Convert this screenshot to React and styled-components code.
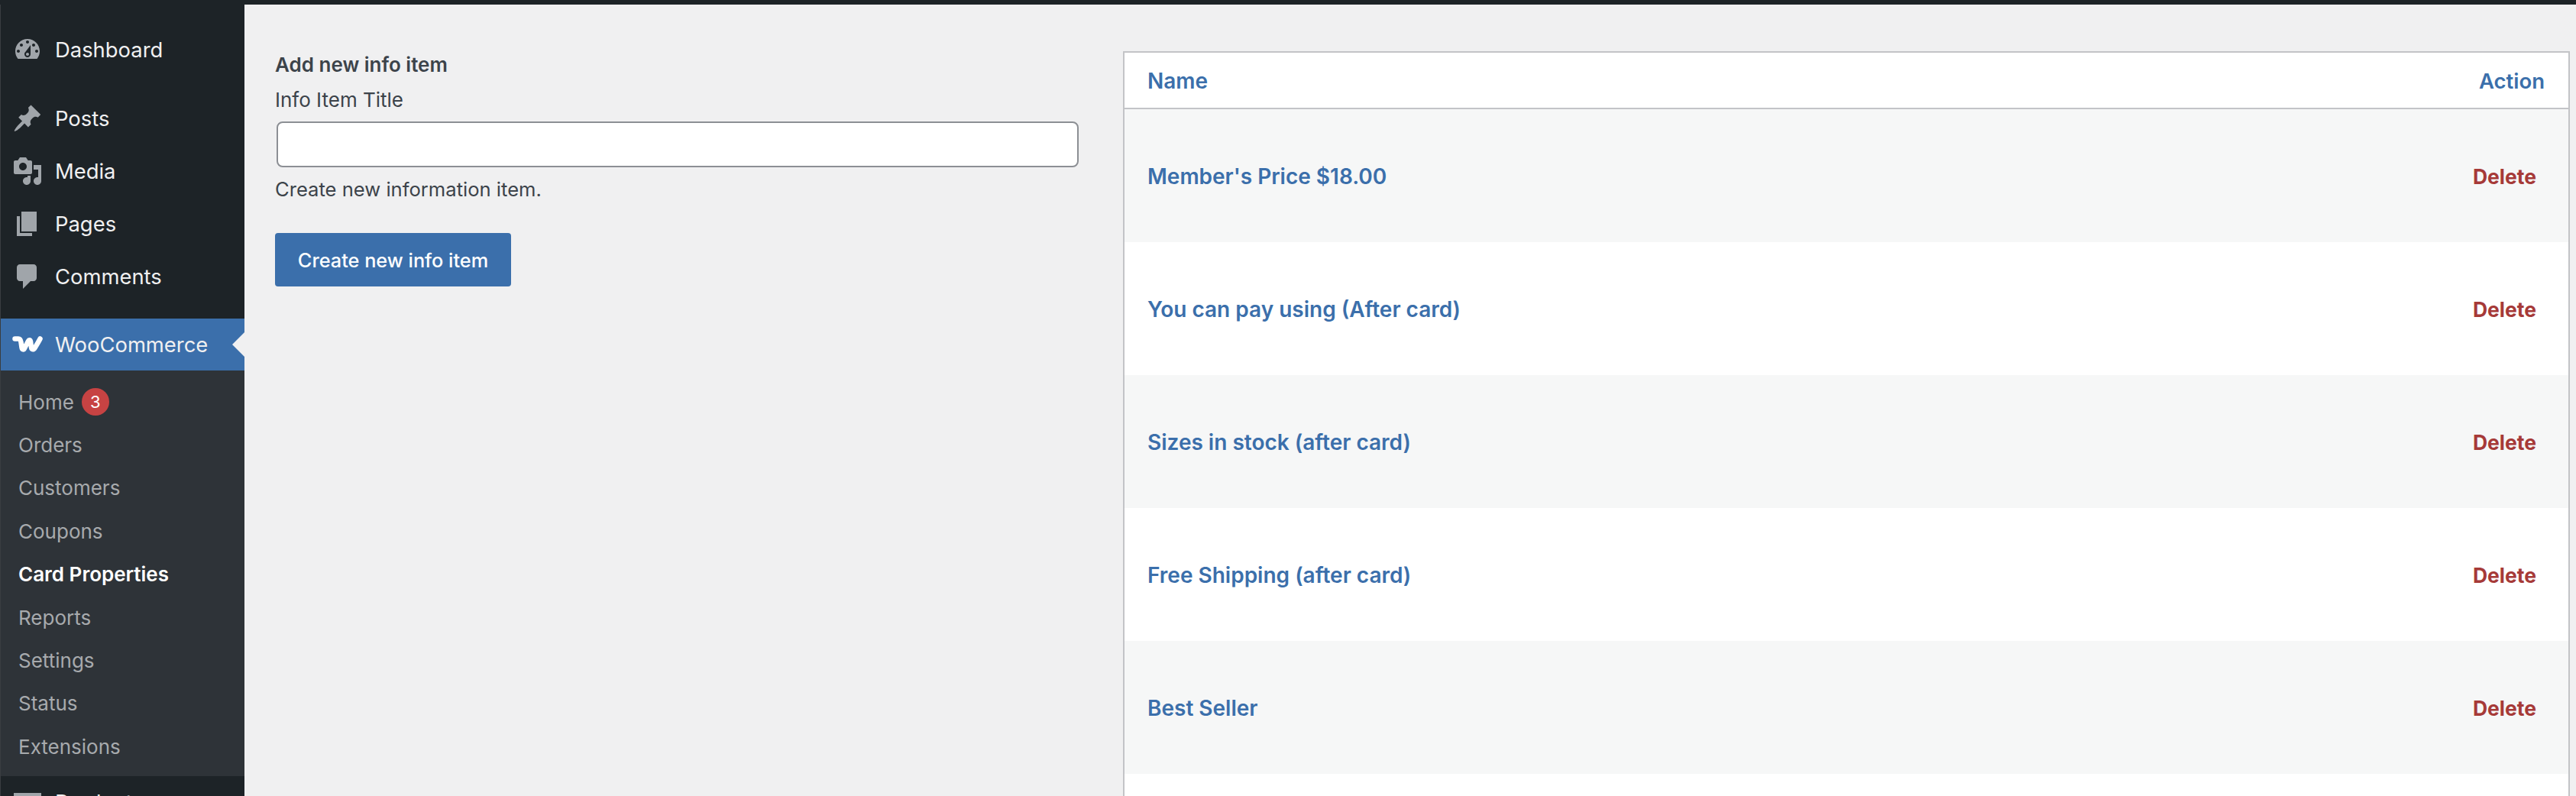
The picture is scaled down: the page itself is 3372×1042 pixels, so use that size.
import React from "react";
import styled, { createGlobalStyle } from "styled-components";

const Global = createGlobalStyle`
  html, body { margin: 0; padding: 0; height: 1042px; overflow: hidden; background: #f0f0f1; }
  * { box-sizing: border-box; }
  body { font-family: Inter, "Liberation Sans", sans-serif; }
`;

const Page = styled.div`
  height: 1042px;
  overflow: hidden;
  display: flex;
  flex-direction: column;
`;
const TopBar = styled.div`
  height: 6px;
  flex: none;
  background: #1d2327;
`;
const Body = styled.div`
  flex: 1;
  min-height: 0;
  display: flex;
`;
const Sidebar = styled.nav`
  width: 320px;
  flex: none;
  background: #1d2327;
  border-left: 1px solid #3a3d41;
  padding-top: 24px;
  overflow: hidden;
`;
const MenuItem = styled.div`
  height: ${(p) => (p.$height ? p.$height : 69)}px;
  margin-top: ${(p) => p.$top || 0}px;
  display: flex;
  align-items: center;
  gap: 16px;
  padding-left: 15px;
  color: #f0f0f1;
  font-size: 27.4px;
  position: relative;
  background: ${(p) => (p.$active ? "#3b6fab" : "transparent")};
  svg { flex: none; display: block; fill: ${(p) => (p.$active ? "#fff" : "#a0a5aa")}; }
`;
const Arrow = styled.span`
  position: absolute;
  right: 0;
  top: 50%;
  margin-top: -16px;
  width: 0;
  height: 0;
  border-style: solid;
  border-width: 16px 16px 16px 0;
  border-color: transparent #f0f0f1 transparent transparent;
`;
const Submenu = styled.div`
  background: #2e3338;
  padding: 13px 0 10px;
`;
const SubItem = styled.div`
  height: 56.4px;
  display: flex;
  align-items: center;
  gap: 10px;
  padding-left: 23px;
  font-size: 26px;
  color: ${(p) => (p.$current ? "#fff" : "#a7aaad")};
  font-weight: ${(p) => (p.$current ? 600 : 400)};
`;
const Badge = styled.span`
  width: 36px;
  height: 36px;
  border-radius: 50%;
  background: #c74343;
  color: #fff;
  font-size: 22px;
  display: flex;
  align-items: center;
  justify-content: center;
`;
const Main = styled.main`
  flex: 1;
  min-width: 0;
  display: grid;
  grid-template-columns: 1110px 1fr;
  padding: 61px 8px 0 40px;
  align-items: start;
  color: #3c434a;
`;
const Form = styled.form`
  display: flex;
  flex-direction: column;
  align-items: flex-start;
`;
const Heading = styled.div`
  font-size: 26px;
  font-weight: 600;
  line-height: 36px;
`;
const Label = styled.label`
  font-size: 26px;
  line-height: 36px;
  margin-top: 10px;
`;
const Input = styled.input`
  width: 1050px;
  height: 60px;
  margin: 10px 0 0 2px;
  background: #fff;
  border: 2px solid #8c8f94;
  border-radius: 8px;
  outline: none;
`;
const Description = styled.p`
  font-size: 25.6px;
  line-height: 36px;
  margin: 11px 0 0;
`;
const Button = styled.button`
  width: 309px;
  height: 70px;
  margin-top: 39px;
  border: 0;
  border-radius: 4px;
  background: #3b6fab;
  color: #fff;
  font: 500 25.3px Inter, "Liberation Sans", sans-serif;
  padding: 0;
`;
const Table = styled.div`
  border: 2px solid #c3c4c7;
  border-bottom: 0;
  background: #fff;
`;
const HeaderRow = styled.div`
  height: 74px;
  border-bottom: 2px solid #c3c4c7;
  display: flex;
  align-items: center;
  justify-content: space-between;
  padding: 1px 31px 0 30px;
  color: #3b6fab;
  font-size: 28px;
  font-weight: 600;
`;
const ActionLabel = styled.span`
  font-size: 27.5px;
`;
const Row = styled.div`
  height: 174px;
  display: flex;
  align-items: center;
  justify-content: space-between;
  padding: 2px 42px 0 30px;
  background: ${(p) => (p.$alt ? "#f6f7f7" : "#fff")};
`;
const ItemName = styled.span`
  color: #3b6fab;
  font-size: 28px;
  font-weight: 600;
`;
const DeleteLink = styled.span`
  color: #a63a38;
  font-size: 26.5px;
  font-weight: 700;
`;

const Icon = ({ d }) => (
  <svg width="40" height="40" viewBox="0 0 20 20"><path d={d} /></svg>
);

const icons = {
  dashboard: "M3.76 16h12.48c1.1-1.37 1.76-3.11 1.76-5 0-4.42-3.58-8-8-8s-8 3.58-8 8c0 1.89.66 3.63 1.76 5zM10 4c.55 0 1 .45 1 1s-.45 1-1 1-1-.45-1-1 .45-1 1-1zM6 6c.55 0 1 .45 1 1s-.45 1-1 1-1-.45-1-1 .45-1 1-1zm8 0c.55 0 1 .45 1 1s-.45 1-1 1-1-.45-1-1 .45-1 1-1zm-5.37 5.55L12 7v6c0 1.1-.9 2-2 2s-2-.9-2-2c0-.57.24-1.08.63-1.45zM4 10c.55 0 1 .45 1 1s-.45 1-1 1-1-.45-1-1 .45-1 1-1zm12 0c.55 0 1 .45 1 1s-.45 1-1 1-1-.45-1-1 .45-1 1-1zm-5 3c0-.55-.45-1-1-1s-1 .45-1 1 .45 1 1 1 1-.45 1-1z",
  post: "M10.44 3.02l1.82-1.82 6.36 6.35-1.83 1.82c-1.05-.68-2.48-.57-3.41.36l-.75.75c-.92.93-1.04 2.35-.35 3.41l-1.83 1.82-2.41-2.41-2.8 2.79c-.42.42-3.38 2.71-3.8 2.29s1.86-3.39 2.28-3.81l2.79-2.79L4.1 9.36l1.83-1.82c1.05.69 2.48.57 3.4-.36l.75-.75c.93-.92 1.05-2.35.36-3.41z",
  media: "M13 11V4c0-.55-.45-1-1-1h-1.67L9 1H5L3.67 3H2c-.55 0-1 .45-1 1v7c0 .55.45 1 1 1h10c.55 0 1-.45 1-1zM7 4.5c1.38 0 2.5 1.12 2.5 2.5S8.38 9.5 7 9.5 4.5 8.38 4.5 7 5.62 4.5 7 4.5zM14 6h5v10.5c0 1.38-1.12 2.5-2.5 2.5S14 17.88 14 16.5s1.12-2.5 2.5-2.5c.17 0 .34.02.5.05V9h-3V6zm-4 8.05V13h2v3.5c0 1.38-1.12 2.5-2.5 2.5S7 17.88 7 16.5 8.12 14 9.5 14c.17 0 .34.02.5.05z",
  page: "M6 15V2h10v13H6zm-1 1h8v2H3V5h2v11z",
  comments: "M5 2h9c1.1 0 2 .9 2 2v7c0 1.1-.9 2-2 2h-2l-5 5v-5H5c-1.1 0-2-.9-2-2V4c0-1.1.9-2 2-2z",
  products: "M1 4h18v3H1zM2 7h16v11H2z",
};

const WooIcon = () => (
  <svg width="40" height="40" viewBox="0 0 40 40">
    <path
      d="M3.5 12.5H8C10.5 12.5 11 14 11.5 17L12.5 24C13 27 15 27 16 25L21 15.5C22 13.5 23.5 14 24 16L25 24C25.5 27 28 27 29.5 24.5C32 20.5 34.5 16.5 36.5 12.5"
      fill="none"
      stroke="#fff"
      strokeWidth="6.5"
      strokeLinecap="round"
      strokeLinejoin="round"
    />
  </svg>
);

const topItems = [
  ["Posts", icons.post],
  ["Media", icons.media],
  ["Pages", icons.page],
  ["Comments", icons.comments],
];
const subItems = ["Orders", "Customers", "Coupons", "Card Properties", "Reports", "Settings", "Status", "Extensions"];
const rows = [
  "Member's Price $18.00",
  "You can pay using (After card)",
  "Sizes in stock (after card)",
  "Free Shipping (after card)",
  "Best Seller",
];

export default function App() {
  return (
    <Page>
      <Global />
      <TopBar />
      <Body>
        <Sidebar>
          <MenuItem><Icon d={icons.dashboard} />Dashboard</MenuItem>
          {topItems.map(([label, d], i) => (
            <MenuItem key={label} $top={i === 0 ? 21 : 0}><Icon d={d} />{label}</MenuItem>
          ))}
          <MenuItem $active $top={21} $height={68}>
            <WooIcon />WooCommerce<Arrow />
          </MenuItem>
          <Submenu>
            <SubItem>Home<Badge>3</Badge></SubItem>
            {subItems.map((s) => (
              <SubItem key={s} $current={s === "Card Properties"}>{s}</SubItem>
            ))}
          </Submenu>
          <MenuItem><Icon d={icons.products} />Products</MenuItem>
        </Sidebar>
        <Main>
          <Form>
            <Heading>Add new info item</Heading>
            <Label>Info Item Title</Label>
            <Input type="text" />
            <Description>Create new information item.</Description>
            <Button type="button">Create new info item</Button>
          </Form>
          <Table>
            <HeaderRow><span>Name</span><ActionLabel>Action</ActionLabel></HeaderRow>
            {rows.map((r, i) => (
              <Row key={r} $alt={i % 2 === 0}>
                <ItemName>{r}</ItemName>
                <DeleteLink>Delete</DeleteLink>
              </Row>
            ))}
            <Row />
          </Table>
        </Main>
      </Body>
    </Page>
  );
}
